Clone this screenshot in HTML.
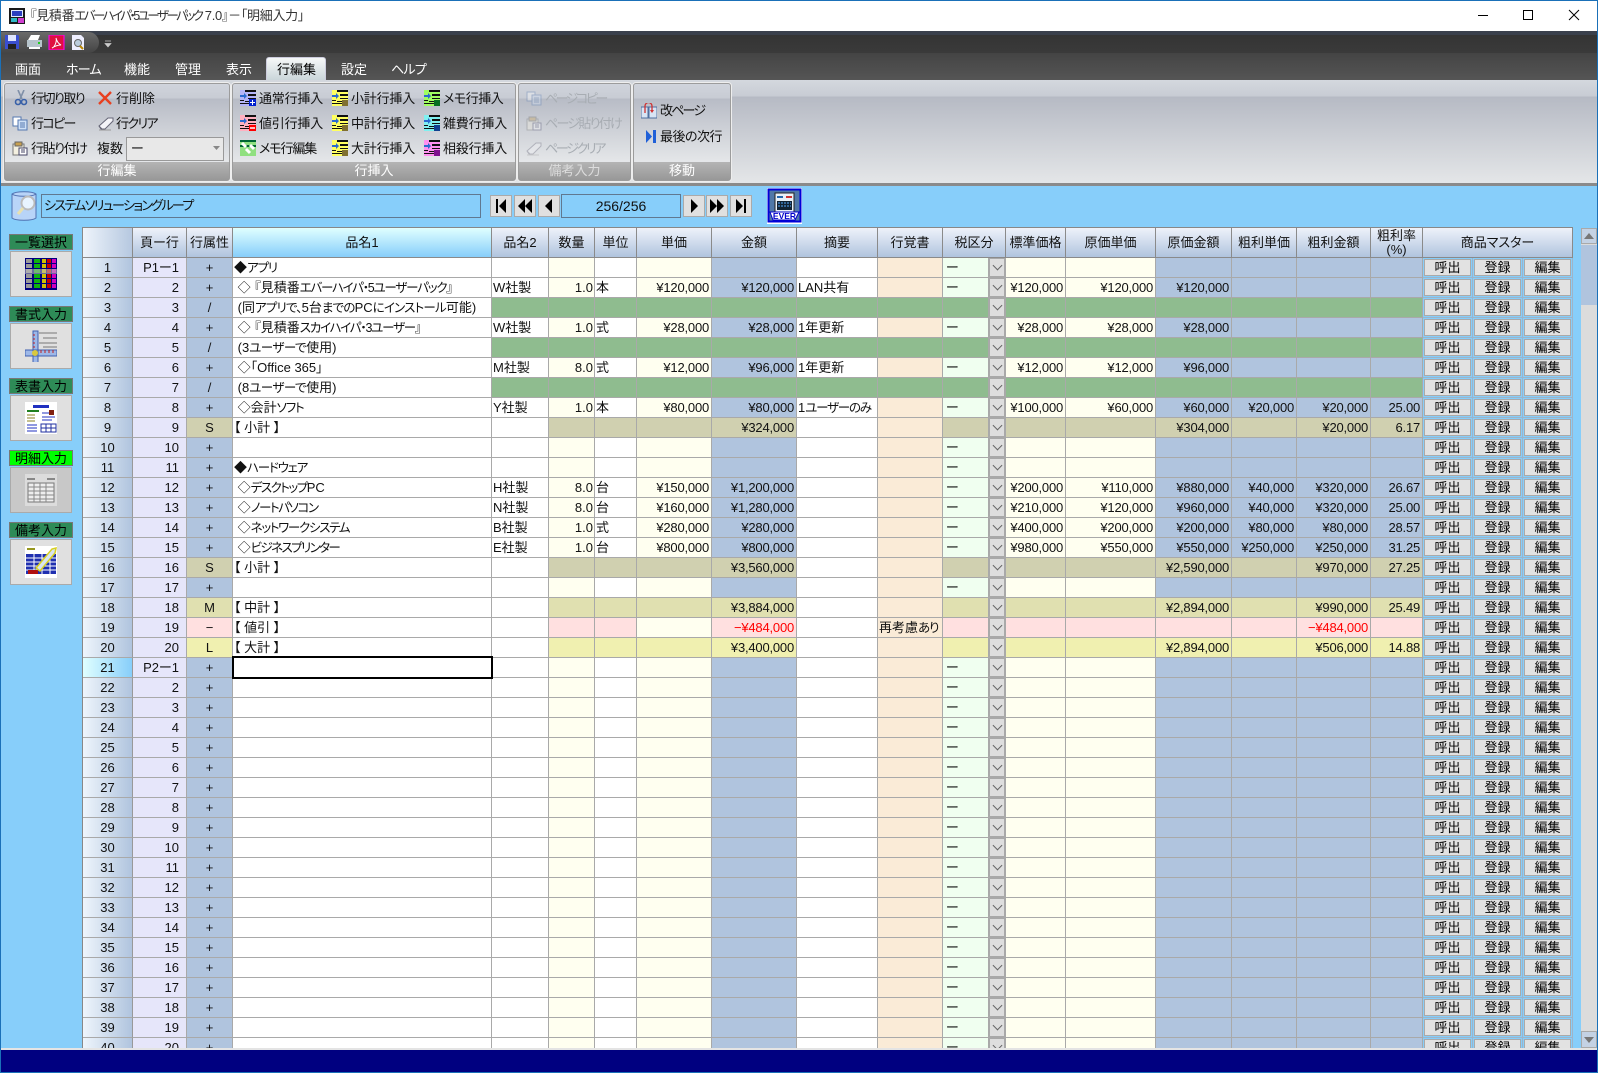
<!DOCTYPE html>
<html lang="ja"><head><meta charset="utf-8"><title>見積番</title>
<style>
*{box-sizing:border-box}
html,body{margin:0;padding:0;width:1598px;height:1073px;overflow:hidden}
body{position:relative;background:#87cefa;font:13px/18px "Liberation Sans","Noto Sans CJK JP",sans-serif;font-feature-settings:"palt";color:#111}
s{text-decoration:none;font-size:12.5px;letter-spacing:-1.2px}
.a{position:absolute;white-space:nowrap}
svg.a{display:block;overflow:hidden}
.t{position:absolute;white-space:nowrap;line-height:18px;height:18px;margin-top:1px}
.dis{color:#a8adb3}
.g{position:absolute;top:83px;height:98px;border:1px solid #9c9c9c;border-radius:3px;background:linear-gradient(#d0d4dc 0,#c8ccd4 14px,#b8bcc6 15px,#e6e8ea 80px);box-shadow:0 0 0 1px #eee}
.g b{position:absolute;left:0;right:0;bottom:0;height:18px;background:linear-gradient(#b4b4b4,#989898);color:#fff;font-weight:normal;text-align:center;line-height:18px}
.lb{position:absolute;left:9px;width:64px;height:16px;background:#2e8b57;border:1px solid #777;text-align:center;line-height:15px;font-size:13px;color:#000}
.bt{position:absolute;left:10px;width:62px;height:46px;background:#e0e0e0;border:1px solid #aaa}
.nb{position:absolute;top:195px;width:22px;height:22px;background:#e0e0e0;border:1px solid #aaa;color:#000}
#tw{position:absolute;left:82px;top:227px;width:1491px;height:821px;overflow:hidden;border-left:1px solid #888;border-top:1px solid #888;background:#fff}
table{border-collapse:separate;border-spacing:0;table-layout:fixed;width:1490px}
td,th{height:20px;padding:0 2px;overflow:hidden;white-space:nowrap;border-right:1px solid #a9a9a9;border-bottom:1px solid #a9a9a9;line-height:18px;font-weight:normal}
th{height:30px;border-color:#8a8a8a;background:linear-gradient(#eef2fa,#b0c4de);text-align:center;line-height:14px;color:#111}
th.cn{background:linear-gradient(90deg,#eef4fb,#b6c8e0)}
th.ac{background:linear-gradient(#e0ffff,#87cefa)}
td:nth-child(1){background:linear-gradient(90deg,#eef5fc,#b0c4de);text-align:center;border-right-color:#999}
tr.x td:nth-child(1){background:linear-gradient(90deg,#e0ffff,#87cefa)}
td:nth-child(2){background:#e6e6fa;text-align:right;padding-right:7px}
td:nth-child(3){background:#b0c4de;text-align:center}
td:nth-child(4){padding-left:1px}
td:nth-child(5){padding-left:1px}
td:nth-child(6){background:#fffff0;text-align:right;padding-right:1px}
td:nth-child(7){padding-left:1px}
td:nth-child(8){background:#fffff0;text-align:right;letter-spacing:-.2px;padding-right:2px}
td:nth-child(9){background:#b0c4de;text-align:right;letter-spacing:-.2px;padding-right:2px}
td:nth-child(10){padding-left:1px}
td:nth-child(11){background:#faebd7;padding-left:1px}
td:nth-child(12){background:#f0fff0;padding-left:3px;border-right:0}
td:nth-child(14),td:nth-child(15){background:#fffff0;text-align:right;letter-spacing:-.2px}
td:nth-child(16),td:nth-child(17),td:nth-child(18),td:nth-child(19){background:#b0c4de;text-align:right;letter-spacing:-.2px}
tr.g1 td:nth-child(n+5):nth-child(-n+19){background:#8fbc8f}
tr.s td:nth-child(3),tr.s td:nth-child(n+6):nth-child(-n+9),tr.s td:nth-child(12),tr.s td:nth-child(n+14):nth-child(-n+19){background:#d0d0b0}
tr.m td:nth-child(3),tr.m td:nth-child(n+6):nth-child(-n+9),tr.m td:nth-child(12),tr.m td:nth-child(n+14):nth-child(-n+19){background:#e0e0b0}
tr.l td:nth-child(3),tr.l td:nth-child(n+6):nth-child(-n+9),tr.l td:nth-child(12),tr.l td:nth-child(n+14):nth-child(-n+19){background:#f0f0b0}
tr.n td:nth-child(3),tr.n td:nth-child(6),tr.n td:nth-child(7),tr.n td:nth-child(9),tr.n td:nth-child(12),tr.n td:nth-child(n+14):nth-child(-n+19){background:#ffe0e0}
tr.n td:nth-child(9),tr.n td:nth-child(18){color:#f00}
tr td:nth-child(13){position:relative;background:#dedede!important;border:2px solid #a9a9a9;border-top-width:1px;padding:0}
tr td:nth-child(13)::after{content:"";position:absolute;left:4px;top:3px;width:6px;height:6px;border-right:1px solid #666;border-bottom:1px solid #666;transform:rotate(45deg)}
tr td:nth-child(n+20){background:#87cefa;padding:0;border-color:#9fb4c8;vertical-align:top}
td i{display:block;font-style:normal;margin:1px 0 0 1px;width:47px;height:17px;background:#e2e2e2;border:1px solid #aaa;text-align:center;line-height:15px;color:#000}
</style></head><body>
<svg width="0" height="0" style="position:absolute"><defs>
<symbol id="L" viewBox="0 0 16 16"><path d="M5 0h11v2H5zM8 4h8v2H8zM8 8h8v1H8zM5 11h5v1H5zM0 13h10v1H0zM0 10h4v1H0z" fill="#111"/><path d="M0 5h4V3l3 3-3 3V7H0z" fill="#2a6ad0"/></symbol>
<symbol id="P" viewBox="0 0 16 16"><path d="M1 4h11v11H1z" fill="#f4f0e0" stroke="#777"/><path d="M3 2h7v4H3z" fill="#c8a050" stroke="#666"/><path d="M7 8h8v7H7z" fill="#fff" stroke="#446"/><path d="M9 10h4M9 12h4" stroke="#446"/></symbol>
<symbol id="C" viewBox="0 0 16 16"><path d="M1 2h8v9H1z" fill="#fff" stroke="#5578b0"/><path d="M6 5h9v10H6z" fill="#cfe0f6" stroke="#5578b0"/><path d="M8 8h5M8 10h5M8 12h5" stroke="#5578b0"/></symbol>
<symbol id="E" viewBox="0 0 16 16"><path d="M1 11 10 3h5v3l-8 8H3z" fill="#f4f4f8" stroke="#667"/><path d="M1 11l3 3" stroke="#667"/><path d="M1 15h12" stroke="#999"/></symbol>
</defs></svg>

<!-- title bar -->
<div class="a" style="left:0;top:0;width:1598px;height:32px;background:#fff;border:1px solid #1a70b8;border-bottom:0"></div>
<svg class="a" style="left:9px;top:8px" width="16" height="16" viewBox="0 0 16 16"><rect width="16" height="16" fill="#1a1a1a"/><rect x="2" y="2" width="12" height="7" fill="#dfe8ff"/><rect x="3" y="3" width="10" height="5" fill="#2a3ec0"/><rect x="2" y="10" width="6" height="4" fill="#2fb8c8"/><rect x="9" y="10" width="6" height="5" fill="#d040d0"/></svg>
<div class="t" style="left:30px;top:7px;color:#333;margin-top:0;letter-spacing:-.3px">『見積番<s style="letter-spacing:-2.5px">エバーハイパ・5ユーザーパック</s> 7.0』－「明細入力」</div>
<svg class="a" style="left:1470px;top:5px" width="120" height="22"><path d="M8 10.5h10M53.5 5.5h9v9h-9z" fill="none" stroke="#000"/><path d="M99 5l10 10M109 5 99 15" stroke="#000" fill="none"/></svg>

<!-- quick access -->
<div class="a" style="left:1px;top:31px;width:1596px;height:4px;background:#3a404c"></div>
<div class="a" style="left:1px;top:35px;width:1596px;height:18px;background:linear-gradient(#343434,#3a3a3a)"></div>
<div class="a" style="left:1px;top:32px;width:98px;height:21px;background:linear-gradient(#6a6a6a,#444);border-radius:0 11px 11px 0"></div>
<svg class="a" style="left:5px;top:35px" width="85" height="15"><path d="M0 0h13l1 1v13H0z" fill="#3a4fd0"/><path d="M3 0h8v6H3z" fill="#dfe6ff"/><path d="M3 9h8v5H3z" fill="#222"/>
<path d="M23 5l3-5h9l-2 5z" fill="#fff"/><path d="M22 5h15v7H22z" fill="#b6c4cc"/><path d="M24 12h11v2H24z" fill="#fff"/><path d="M33 7h2v2h-2z" fill="#2c2"/>
<path d="M44 0h15v15H44z" fill="#e01040" stroke="#ff00ff"/><path d="M47 13c3-1 5-7 4-10 1 4 3 6 5 7-3 0-6 1-9 3z" fill="none" stroke="#fff"/>
<path d="M67 0h9l3 3v12H67z" fill="#eef"/><circle cx="73" cy="8" r="3.5" fill="#bcd" stroke="#666"/><path d="M75 11l3 3" stroke="#b80" stroke-width="2"/></svg>
<svg class="a" style="left:104px;top:40px" width="8" height="8"><path d="M1 1h6M1 3.5h6L4 7z" fill="#ccc" stroke="#ccc" stroke-width=".7"/></svg>

<!-- menu -->
<div class="a" style="left:1px;top:53px;width:1596px;height:27px;background:linear-gradient(#444,#555)"></div>
<div class="a" style="left:266px;top:57px;width:60px;height:24px;background:linear-gradient(#f6f8f8,#c8d4d8);border:1px solid #ccd;border-bottom:0;border-radius:3px 3px 0 0"></div>
<div class="t" style="left:15px;top:60px;color:#fff">画面</div>
<div class="t" style="left:66px;top:60px;color:#fff;letter-spacing:-.8px">ホーム</div>
<div class="t" style="left:124px;top:60px;color:#fff">機能</div>
<div class="t" style="left:175px;top:60px;color:#fff">管理</div>
<div class="t" style="left:226px;top:60px;color:#fff">表示</div>
<div class="t" style="left:277px;top:60px;color:#000">行編集</div>
<div class="t" style="left:341px;top:60px;color:#fff">設定</div>
<div class="t" style="left:391px;top:60px;color:#fff;letter-spacing:-.8px">ヘルプ</div>

<!-- ribbon -->
<div class="a" style="left:1px;top:80px;width:1596px;height:103px;background:linear-gradient(#d4d8de 0,#c8ccd4 16px,#b6bac4 17px,#e4e6e8 100%)"></div>
<div class="a" style="left:1px;top:183px;width:1596px;height:3px;background:#8a8a8a"></div>
<div class="g" style="left:4px;width:226px"><b>行編集</b></div>
<div class="g" style="left:232px;width:284px"><b>行挿入</b></div>
<div class="g" style="left:518px;width:113px"><b style="color:#ddd">備考入力</b></div>
<div class="g" style="left:633px;width:98px"><b>移動</b></div>

<svg class="a" style="left:14px;top:90px" width="14" height="16" viewBox="0 0 14 16"><path d="M4 0l4 9M10 0 6 9" stroke="#8090a8" stroke-width="1.6" fill="none"/><circle cx="4" cy="12" r="2.5" fill="none" stroke="#3860a8" stroke-width="1.6"/><circle cx="10" cy="12" r="2.5" fill="none" stroke="#3860a8" stroke-width="1.6"/></svg>
<div class="t" style="left:31px;top:89px;letter-spacing:-1.5px">行切り取り</div>
<svg class="a" style="left:98px;top:91px" width="14" height="14"><path d="M1 1l12 12M13 1 1 13" stroke="#e84020" stroke-width="2.4"/></svg>
<div class="t" style="left:116px;top:89px">行削除</div>
<svg class="a" style="left:12px;top:115px" width="16" height="16"><use href="#C"/></svg>
<div class="t" style="left:31px;top:114px;letter-spacing:-1.6px">行コピー</div>
<svg class="a" style="left:98px;top:115px" width="16" height="16"><use href="#E"/></svg>
<div class="t" style="left:116px;top:114px;letter-spacing:-1.6px">行クリア</div>
<svg class="a" style="left:12px;top:140px" width="16" height="16"><use href="#P"/></svg>
<div class="t" style="left:31px;top:139px;letter-spacing:-1.4px">行貼り付け</div>
<div class="t" style="left:97px;top:139px">複数</div>
<div class="a" style="left:126px;top:137px;width:98px;height:24px;background:#e8e8e8;border:1px solid #999;padding-left:4px;line-height:22px">ー</div>
<svg class="a" style="left:213px;top:146px" width="7" height="5"><path d="M0 0h7L3.5 4z" fill="#888"/></svg>

<svg class="a" style="left:240px;top:90px" width="16" height="16"><rect width="16" height="16" fill="#b4b4f8"/><use href="#L"/><rect x="9" y="9" width="7" height="7" fill="#0020d0"/><path d="M10 12.5h5M12.5 10v5" stroke="#fff"/></svg>
<svg class="a" style="left:240px;top:115px" width="16" height="16"><rect width="16" height="16" fill="#ffb0c0"/><use href="#L"/><rect x="9" y="10" width="7" height="6" fill="#f00"/><path d="M10 13h5" stroke="#fff" stroke-width="1.5"/></svg>
<svg class="a" style="left:240px;top:140px" width="16" height="16"><rect width="16" height="16" fill="#90e080"/><path d="M0 0h16v2H0zM0 5h16v2H0z" fill="#063"/><path d="M2 3l4 4M6 9l4 4M10 5l4 4" stroke="#fff" stroke-width="3"/></svg>
<div class="t" style="left:259px;top:89px;letter-spacing:-.2px">通常行挿入</div>
<div class="t" style="left:259px;top:114px;letter-spacing:-.2px">値引行挿入</div>
<div class="t" style="left:259px;top:139px;letter-spacing:-1.1px">メモ行編集</div>
<svg class="a" style="left:332px;top:90px" width="16" height="16"><rect width="16" height="16" fill="#ffff60"/><use href="#L"/><rect x="10" y="10" width="6" height="6" fill="#807030"/></svg>
<svg class="a" style="left:332px;top:115px" width="16" height="16"><rect width="16" height="16" fill="#ffff60"/><use href="#L"/><rect x="10" y="10" width="6" height="6" fill="#807030"/></svg>
<svg class="a" style="left:332px;top:140px" width="16" height="16"><rect width="16" height="16" fill="#ffff60"/><use href="#L"/><rect x="10" y="10" width="6" height="6" fill="#807030"/></svg>
<div class="t" style="left:351px;top:89px;letter-spacing:-.2px">小計行挿入</div>
<div class="t" style="left:351px;top:114px;letter-spacing:-.2px">中計行挿入</div>
<div class="t" style="left:351px;top:139px;letter-spacing:-.2px">大計行挿入</div>
<svg class="a" style="left:424px;top:90px" width="16" height="16"><rect width="16" height="16" fill="#a0ff60"/><use href="#L"/><rect x="10" y="10" width="6" height="6" fill="#087020"/></svg>
<svg class="a" style="left:424px;top:115px" width="16" height="16"><rect width="16" height="16" fill="#80f0f0"/><use href="#L"/><rect x="10" y="10" width="6" height="6" fill="#104090"/></svg>
<svg class="a" style="left:424px;top:140px" width="16" height="16"><rect width="16" height="16" fill="#ff90f0"/><use href="#L"/><rect x="10" y="10" width="6" height="6" fill="#801090"/></svg>
<div class="t" style="left:443px;top:89px;letter-spacing:-.5px">メモ行挿入</div>
<div class="t" style="left:443px;top:114px;letter-spacing:-.2px">雑費行挿入</div>
<div class="t" style="left:443px;top:139px;letter-spacing:-.2px">相殺行挿入</div>

<svg class="a" style="left:526px;top:90px;opacity:.35" width="16" height="16"><use href="#C"/></svg>
<svg class="a" style="left:526px;top:115px;opacity:.35" width="16" height="16"><use href="#P"/></svg>
<svg class="a" style="left:526px;top:140px;opacity:.35" width="16" height="16"><use href="#E"/></svg>
<div class="t dis" style="left:545px;top:89px;letter-spacing:-2.5px">ページコピー</div>
<div class="t dis" style="left:545px;top:114px;letter-spacing:-1.7px">ページ貼り付け</div>
<div class="t dis" style="left:545px;top:139px;letter-spacing:-2.3px">ページクリア</div>

<svg class="a" style="left:641px;top:103px" width="16" height="16"><path d="M0 4h7v11H0zM8 4h8v11H8z" fill="#d8e4f4" stroke="#5070a0"/><path d="M4 10V3a3 3 0 0 1 7 0v5" fill="none" stroke="#d03030" stroke-width="1.3"/><path d="M9 7h4l-2 3z" fill="#d03030"/></svg>
<div class="t" style="left:660px;top:101px;letter-spacing:-1.8px">改ページ</div>
<svg class="a" style="left:646px;top:130px" width="10" height="13"><path d="M0 0l6 6.5L0 13z" fill="#2060d8"/><path d="M7 0h3v13H7z" fill="#2060d8"/></svg>
<div class="t" style="left:660px;top:127px;letter-spacing:-.5px">最後の次行</div>

<!-- search row -->
<svg class="a" style="left:11px;top:190px" width="28" height="32" viewBox="0 0 28 32"><path d="M1 4c4-3 20-3 24 0v24c-4 3-20 3-24 0z" fill="#b8d4f8" stroke="#5070b0"/><path d="M1 4c4 3 20 3 24 0" fill="none" stroke="#5070b0"/><circle cx="17" cy="13" r="6.5" fill="#e8f4ff" stroke="#bbb" stroke-width="2"/><path d="M12 18l-5 6" stroke="#e8e0b0" stroke-width="3"/></svg>
<div class="a" style="left:41px;top:194px;width:440px;height:24px;border:1px solid #607890;padding-left:2px;line-height:21px;letter-spacing:-1.65px">システムソリューショングループ</div>
<div class="nb" style="left:490px"><svg width="20" height="20" style="display:block"><path d="M5 3h2v14H5zM15 3v14L8 10z"/></svg></div>
<div class="nb" style="left:514px"><svg width="20" height="20" style="display:block"><path d="M10 3v14L3 10zM17 3v14l-7-7z"/></svg></div>
<div class="nb" style="left:538px"><svg width="20" height="20" style="display:block"><path d="M13 3v14L6 10z"/></svg></div>
<div class="a" style="left:561px;top:194px;width:120px;height:24px;border:1px solid #607890;text-align:center;line-height:22px;font-size:14px">256/256</div>
<div class="nb" style="left:683px"><svg width="20" height="20" style="display:block"><path d="M7 3v14l7-7z"/></svg></div>
<div class="nb" style="left:706px"><svg width="20" height="20" style="display:block"><path d="M3 3v14l7-7zM10 3v14l7-7z"/></svg></div>
<div class="nb" style="left:730px"><svg width="20" height="20" style="display:block"><path d="M5 3v14l7-7zM13 3h2v14h-2z"/></svg></div>
<svg class="a" style="left:767px;top:188px" width="35" height="36" viewBox="0 0 35 36"><rect width="35" height="36" fill="#fff"/><rect x="1.5" y="1.5" width="32" height="32" fill="#5078a8" stroke="#0000d8" stroke-width="2"/><path d="M8 5h19v19H8z" fill="#e8f0f8" stroke="#222"/><path d="M10 8h6v2h-6z" fill="#26a"/><path d="M19 8h6v2h-6z" fill="#c33"/><path d="M10 13h15v9H10z" fill="#123"/><path d="M11 15h13M11 18h13" stroke="#5af" stroke-dasharray="2 1"/><path d="M3 24h29l-4 8H6z" fill="#fff" stroke="#00c"/><text x="17.5" y="31" text-anchor="middle" font-size="8.5" font-family="Liberation Sans" fill="#00c" font-weight="bold">EVER</text></svg>

<!-- left panel -->
<div class="lb" style="top:234px">一覧選択</div>
<div class="bt" style="top:251px"><svg class="a" style="left:14px;top:6px" width="32" height="32"><rect width="32" height="32" fill="#00007c"/><path d="M4 1v30" stroke="#9a9a9a" stroke-width="6" stroke-dasharray="4 1"/><path d="M12 1v30" stroke="#10b010" stroke-width="6" stroke-dasharray="4 1"/><path d="M19 1v30" stroke="#d0c000" stroke-width="4" stroke-dasharray="4 1"/><path d="M24 1v30" stroke="#c80000" stroke-width="4" stroke-dasharray="4 1"/><path d="M29 1v30" stroke="#d000c0" stroke-width="4" stroke-dasharray="4 1"/><rect y="11" width="32" height="5" fill="#c0c0c0" opacity=".55"/></svg></div>
<div class="lb" style="top:306px">書式入力</div>
<div class="bt" style="top:323px"><svg class="a" style="left:14px;top:6px" width="32" height="32"><path d="M14 3h18M18 8h14M14 13h18M18 17h14" stroke="#777"/><path d="M8 1h5v32H8zM0 20h32v6H0z" fill="#9db8e8" stroke="#4060b0"/><path d="M8 5h2M8 9h2M8 13h2M8 17h2M16 20v3M20 20v3M24 20v3M28 20v3" stroke="#c02020"/><circle cx="10" cy="23" r="3" fill="#d8c840"/></svg></div>
<div class="lb" style="top:378px">表書入力</div>
<div class="bt" style="top:395px"><svg class="a" style="left:14px;top:6px" width="32" height="32"><rect width="32" height="32" fill="#fff"/><path d="M8 3h16v3H8z" fill="#2030c0"/><path d="M2 9h12" stroke="#208020" stroke-width="2"/><path d="M2 13h8M2 16h8M2 19h8" stroke="#888020"/><path d="M17 11h9M17 15h13M17 18h10M2 23h10M2 26h10M2 29h10" stroke="#2030c0"/><rect x="24" y="8" width="5" height="5" fill="#802010"/><path d="M16 22h15v8H16zM21 22v8M26 22v8M16 26h15" fill="none" stroke="#2030a0"/></svg></div>
<div class="lb" style="top:450px;background:#00ff00">明細入力</div>
<div class="bt" style="top:467px;background:#c8c8c8"><svg class="a" style="left:14px;top:6px" width="32" height="32"><rect width="32" height="32" fill="#dcdcdc"/><path d="M2 5h8M22 5h8" stroke="#888" stroke-width="2"/><path d="M3 9h26v19H3z" fill="#eee" stroke="#777"/><path d="M3 13h26M3 17h26M3 21h26M3 25h26M9 9v19M15 9v19M21 9v19" stroke="#888"/></svg></div>
<div class="lb" style="top:522px">備考入力</div>
<div class="bt" style="top:539px"><svg class="a" style="left:14px;top:6px" width="32" height="32"><rect width="32" height="32" fill="#fff"/><path d="M2 3h8" stroke="#989820" stroke-width="2"/><path d="M1 8h30v20H1z" fill="#2030b0"/><path d="M1 12h30M1 16h30M1 20h30M1 24h30M9 8v20M17 8v20M25 8v20" stroke="#fff"/><rect x="3" y="24" width="10" height="4" fill="#b01010"/><path d="M11 22 27 3l4-1-1 5-15 18z" fill="#d8e4f0" stroke="#d8d020" stroke-width="1.5"/></svg></div>

<!-- table -->
<div id="tw"><table>
<colgroup><col style="width:50px"><col style="width:54px"><col style="width:46px"><col style="width:259px"><col style="width:57px"><col style="width:46px"><col style="width:42px"><col style="width:75px"><col style="width:85px"><col style="width:81px"><col style="width:65px"><col style="width:45px"><col style="width:18px"><col style="width:60px"><col style="width:90px"><col style="width:76px"><col style="width:65px"><col style="width:74px"><col style="width:52px"><col style="width:50px"><col style="width:50px"><col style="width:50px"></colgroup>
<tr><th class="cn"></th><th>頁ー行</th><th>行属性</th><th class="ac">品名1</th><th>品名2</th><th>数量</th><th>単位</th><th>単価</th><th>金額</th><th>摘要</th><th>行覚書</th><th colspan="2">税区分</th><th>標準価格</th><th>原価単価</th><th>原価金額</th><th>粗利単価</th><th>粗利金額</th><th>粗利率<br>(%)</th><th colspan="3">商品マスター</th></tr>
<tr><td>1<td>P1ー1<td>+<td>◆<s>アプリ</s><td><td><td><td><td><td><td><td>ー<td><td><td><td><td><td><td><td><i>呼出</i><td><i>登録</i><td><i>編集</i>
<tr><td>2<td>2<td>+<td>&nbsp;◇&nbsp;『見積番<s>エバーハイパ・5ユーザーパック</s>』<td>W社製<td>1.0<td>本<td>¥120,000<td>¥120,000<td>LAN共有<td><td>ー<td><td>¥120,000<td>¥120,000<td>¥120,000<td><td><td><td><i>呼出</i><td><i>登録</i><td><i>編集</i>
<tr class="g1"><td>3<td>3<td>/<td>&nbsp;(同<s style="letter-spacing:-.8px">アプリで、</s>5台<s style="letter-spacing:-.8px">までの</s>PC<s style="letter-spacing:-.8px">にインストール</s>可能)<td><td><td><td><td><td><td><td><td><td><td><td><td><td><td><td><i>呼出</i><td><i>登録</i><td><i>編集</i>
<tr><td>4<td>4<td>+<td>&nbsp;◇&nbsp;『見積番<s>スカイハイパ・3ユーザー</s>』<td>W社製<td>1.0<td>式<td>¥28,000<td>¥28,000<td>1年更新<td><td>ー<td><td>¥28,000<td>¥28,000<td>¥28,000<td><td><td><td><i>呼出</i><td><i>登録</i><td><i>編集</i>
<tr class="g1"><td>5<td>5<td>/<td>&nbsp;(3<s style="letter-spacing:-.5px">ユーザーで</s>使用)<td><td><td><td><td><td><td><td><td><td><td><td><td><td><td><td><i>呼出</i><td><i>登録</i><td><i>編集</i>
<tr><td>6<td>6<td>+<td>&nbsp;◇「Office 365」<td>M社製<td>8.0<td>式<td>¥12,000<td>¥96,000<td>1年更新<td><td>ー<td><td>¥12,000<td>¥12,000<td>¥96,000<td><td><td><td><i>呼出</i><td><i>登録</i><td><i>編集</i>
<tr class="g1"><td>7<td>7<td>/<td>&nbsp;(8<s style="letter-spacing:-.5px">ユーザーで</s>使用)<td><td><td><td><td><td><td><td><td><td><td><td><td><td><td><td><i>呼出</i><td><i>登録</i><td><i>編集</i>
<tr><td>8<td>8<td>+<td>&nbsp;◇会計<s>ソフト</s><td>Y社製<td>1.0<td>本<td>¥80,000<td>¥80,000<td>1<s>ユーザーのみ</s><td><td>ー<td><td>¥100,000<td>¥60,000<td>¥60,000<td>¥20,000<td>¥20,000<td>25.00<td><i>呼出</i><td><i>登録</i><td><i>編集</i>
<tr class="s"><td>9<td>9<td>S<td>【 小計 】<td><td><td><td><td>¥324,000<td><td><td><td><td><td><td>¥304,000<td><td>¥20,000<td>6.17<td><i>呼出</i><td><i>登録</i><td><i>編集</i>
<tr><td>10<td>10<td>+<td><td><td><td><td><td><td><td><td>ー<td><td><td><td><td><td><td><td><i>呼出</i><td><i>登録</i><td><i>編集</i>
<tr><td>11<td>11<td>+<td>◆<s>ハードウェア</s><td><td><td><td><td><td><td><td>ー<td><td><td><td><td><td><td><td><i>呼出</i><td><i>登録</i><td><i>編集</i>
<tr><td>12<td>12<td>+<td>&nbsp;◇<s style="letter-spacing:-1.5px">デスクトップ</s>PC<td>H社製<td>8.0<td>台<td>¥150,000<td>¥1,200,000<td><td><td>ー<td><td>¥200,000<td>¥110,000<td>¥880,000<td>¥40,000<td>¥320,000<td>26.67<td><i>呼出</i><td><i>登録</i><td><i>編集</i>
<tr><td>13<td>13<td>+<td>&nbsp;◇<s style="letter-spacing:-1.4px">ノートパソコン</s><td>N社製<td>8.0<td>台<td>¥160,000<td>¥1,280,000<td><td><td>ー<td><td>¥210,000<td>¥120,000<td>¥960,000<td>¥40,000<td>¥320,000<td>25.00<td><i>呼出</i><td><i>登録</i><td><i>編集</i>
<tr><td>14<td>14<td>+<td>&nbsp;◇<s style="letter-spacing:-1.3px">ネットワークシステム</s><td>B社製<td>1.0<td>式<td>¥280,000<td>¥280,000<td><td><td>ー<td><td>¥400,000<td>¥200,000<td>¥200,000<td>¥80,000<td>¥80,000<td>28.57<td><i>呼出</i><td><i>登録</i><td><i>編集</i>
<tr><td>15<td>15<td>+<td>&nbsp;◇<s style="letter-spacing:-1.6px">ビジネスプリンター</s><td>E社製<td>1.0<td>台<td>¥800,000<td>¥800,000<td><td><td>ー<td><td>¥980,000<td>¥550,000<td>¥550,000<td>¥250,000<td>¥250,000<td>31.25<td><i>呼出</i><td><i>登録</i><td><i>編集</i>
<tr class="s"><td>16<td>16<td>S<td>【 小計 】<td><td><td><td><td>¥3,560,000<td><td><td><td><td><td><td>¥2,590,000<td><td>¥970,000<td>27.25<td><i>呼出</i><td><i>登録</i><td><i>編集</i>
<tr><td>17<td>17<td>+<td><td><td><td><td><td><td><td><td>ー<td><td><td><td><td><td><td><td><i>呼出</i><td><i>登録</i><td><i>編集</i>
<tr class="m"><td>18<td>18<td>M<td>【 中計 】<td><td><td><td><td>¥3,884,000<td><td><td><td><td><td><td>¥2,894,000<td><td>¥990,000<td>25.49<td><i>呼出</i><td><i>登録</i><td><i>編集</i>
<tr class="n"><td>19<td>19<td>−<td>【 値引 】<td><td><td><td><td>−¥484,000<td><td>再考慮<s>あり</s><td><td><td><td><td><td><td>−¥484,000<td><td><i>呼出</i><td><i>登録</i><td><i>編集</i>
<tr class="l"><td>20<td>20<td>L<td>【 大計 】<td><td><td><td><td>¥3,400,000<td><td><td><td><td><td><td>¥2,894,000<td><td>¥506,000<td>14.88<td><i>呼出</i><td><i>登録</i><td><i>編集</i>
<tr class="x"><td>21<td>P2ー1<td>+<td><td><td><td><td><td><td><td><td>ー<td><td><td><td><td><td><td><td><i>呼出</i><td><i>登録</i><td><i>編集</i>
<tr><td>22<td>2<td>+<td><td><td><td><td><td><td><td><td>ー<td><td><td><td><td><td><td><td><i>呼出</i><td><i>登録</i><td><i>編集</i>
<tr><td>23<td>3<td>+<td><td><td><td><td><td><td><td><td>ー<td><td><td><td><td><td><td><td><i>呼出</i><td><i>登録</i><td><i>編集</i>
<tr><td>24<td>4<td>+<td><td><td><td><td><td><td><td><td>ー<td><td><td><td><td><td><td><td><i>呼出</i><td><i>登録</i><td><i>編集</i>
<tr><td>25<td>5<td>+<td><td><td><td><td><td><td><td><td>ー<td><td><td><td><td><td><td><td><i>呼出</i><td><i>登録</i><td><i>編集</i>
<tr><td>26<td>6<td>+<td><td><td><td><td><td><td><td><td>ー<td><td><td><td><td><td><td><td><i>呼出</i><td><i>登録</i><td><i>編集</i>
<tr><td>27<td>7<td>+<td><td><td><td><td><td><td><td><td>ー<td><td><td><td><td><td><td><td><i>呼出</i><td><i>登録</i><td><i>編集</i>
<tr><td>28<td>8<td>+<td><td><td><td><td><td><td><td><td>ー<td><td><td><td><td><td><td><td><i>呼出</i><td><i>登録</i><td><i>編集</i>
<tr><td>29<td>9<td>+<td><td><td><td><td><td><td><td><td>ー<td><td><td><td><td><td><td><td><i>呼出</i><td><i>登録</i><td><i>編集</i>
<tr><td>30<td>10<td>+<td><td><td><td><td><td><td><td><td>ー<td><td><td><td><td><td><td><td><i>呼出</i><td><i>登録</i><td><i>編集</i>
<tr><td>31<td>11<td>+<td><td><td><td><td><td><td><td><td>ー<td><td><td><td><td><td><td><td><i>呼出</i><td><i>登録</i><td><i>編集</i>
<tr><td>32<td>12<td>+<td><td><td><td><td><td><td><td><td>ー<td><td><td><td><td><td><td><td><i>呼出</i><td><i>登録</i><td><i>編集</i>
<tr><td>33<td>13<td>+<td><td><td><td><td><td><td><td><td>ー<td><td><td><td><td><td><td><td><i>呼出</i><td><i>登録</i><td><i>編集</i>
<tr><td>34<td>14<td>+<td><td><td><td><td><td><td><td><td>ー<td><td><td><td><td><td><td><td><i>呼出</i><td><i>登録</i><td><i>編集</i>
<tr><td>35<td>15<td>+<td><td><td><td><td><td><td><td><td>ー<td><td><td><td><td><td><td><td><i>呼出</i><td><i>登録</i><td><i>編集</i>
<tr><td>36<td>16<td>+<td><td><td><td><td><td><td><td><td>ー<td><td><td><td><td><td><td><td><i>呼出</i><td><i>登録</i><td><i>編集</i>
<tr><td>37<td>17<td>+<td><td><td><td><td><td><td><td><td>ー<td><td><td><td><td><td><td><td><i>呼出</i><td><i>登録</i><td><i>編集</i>
<tr><td>38<td>18<td>+<td><td><td><td><td><td><td><td><td>ー<td><td><td><td><td><td><td><td><i>呼出</i><td><i>登録</i><td><i>編集</i>
<tr><td>39<td>19<td>+<td><td><td><td><td><td><td><td><td>ー<td><td><td><td><td><td><td><td><i>呼出</i><td><i>登録</i><td><i>編集</i>
<tr><td>40<td>20<td>+<td><td><td><td><td><td><td><td><td>ー<td><td><td><td><td><td><td><td><i>呼出</i><td><i>登録</i><td><i>編集</i>
</table></div>
<div class="a" style="left:232px;top:656px;width:261px;height:23px;border:2px solid #000"></div>

<!-- scrollbar -->
<div class="a" style="left:1581px;top:228px;width:16px;height:820px;background:#dcdcdc"></div>
<div class="a" style="left:1581px;top:228px;width:16px;height:16px;background:#c4d2e4;border:1px solid #a9a9a9"></div>
<svg class="a" style="left:1583px;top:232px" width="12" height="8"><path d="M1 7h10L6 1z" fill="#777"/></svg>
<div class="a" style="left:1581px;top:245px;width:16px;height:60px;background:#b0c4de"></div>
<div class="a" style="left:1581px;top:1031px;width:16px;height:17px;background:#c4d2e4;border:1px solid #a9a9a9"></div>
<svg class="a" style="left:1583px;top:1036px" width="12" height="8"><path d="M1 1h10L6 7z" fill="#777"/></svg>

<!-- bottom -->
<div class="a" style="left:1px;top:1048px;width:1596px;height:2px;background:#e4e4e4"></div>
<div class="a" style="left:1px;top:1050px;width:1596px;height:22px;background:#000080"></div>
<div class="a" style="left:0;top:32px;width:1px;height:1041px;background:#1a70b8"></div>
<div class="a" style="left:1597px;top:32px;width:1px;height:1041px;background:#1a70b8"></div>
<div class="a" style="left:0;top:1072px;width:1598px;height:1px;background:#1a70b8"></div>
</body></html>
